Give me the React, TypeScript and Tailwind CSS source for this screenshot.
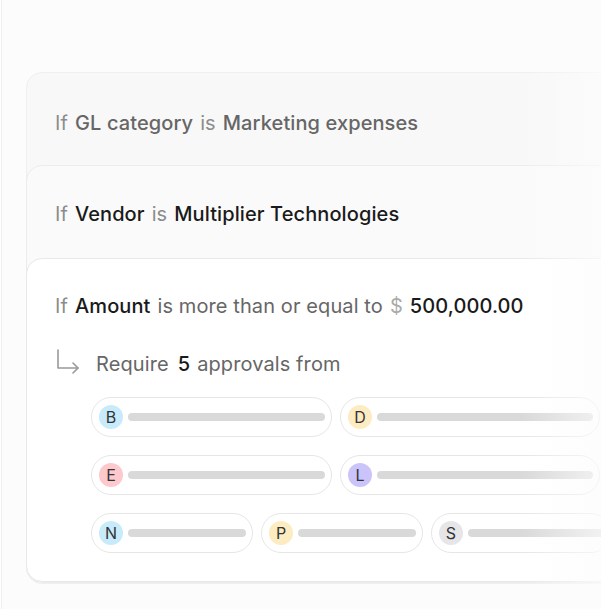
const approvers = [
  [
    { letter: 'B', color: 'bg-[#c8ebfb]', w: 'w-[241px]' },
    { letter: 'D', color: 'bg-[#fdecc1]', w: 'w-[260px]' },
  ],
  [
    { letter: 'E', color: 'bg-[#fdc9cc]', w: 'w-[241px]' },
    { letter: 'L', color: 'bg-[#cbc4fb]', w: 'w-[260px]' },
  ],
  [
    { letter: 'N', color: 'bg-[#c8ebfb]', w: 'w-[162px]' },
    { letter: 'P', color: 'bg-[#fdecc1]', w: 'w-[162px]' },
    { letter: 'S', color: 'bg-[#e6e6e8]', w: 'w-[180px]' },
  ],
]

function Pill({ letter, color, w }: { letter: string; color: string; w: string }) {
  return (
    <div className={`${w} h-[40px] shrink-0 rounded-full border-[1.5px] border-[#e6e6e6] bg-white flex items-center pl-[7px] pr-[6px] gap-[5px]`}>
      <div className={`w-[24px] h-[24px] rounded-full ${color} flex items-center justify-center text-[16px] text-[#333] shrink-0`}>
        {letter}
      </div>
      <div className="flex-1 h-[8px] rounded-full bg-[#d9d9d9]" />
    </div>
  )
}

export default function App() {
  return (
    <div className="h-[609px] w-[601px] overflow-hidden bg-white" style={{ fontFamily: 'Inter, "Noto Sans", sans-serif' }}>
      <div className="relative ml-px h-full border-l border-[#f0f0f0] bg-[#fcfcfc] pt-[72px] pl-[24px]">
        <div className="w-[640px] rounded-[16px] border border-[#efefef] bg-[#f8f8f8]">
          <div className="h-[92px] flex items-center gap-[7px] pt-[7px] px-[28px] text-[20px] tracking-[0.1px]">
            <span className="text-[#8c8c8c]">If</span>
            <span className="font-[450] text-[#666]">GL category</span>
            <span className="text-[#8c8c8c]">is</span>
            <span className="font-[450] text-[#666]">Marketing expenses</span>
          </div>
          <div className="-mx-px rounded-[16px] border border-[#ececec] bg-[#fafafa]">
            <div className="h-[92px] flex items-center gap-[7px] pt-[4px] px-[28px] text-[20px] tracking-[0.1px]">
              <span className="text-[#8c8c8c]">If</span>
              <span className="font-[450] text-[#1a1a1a]">Vendor</span>
              <span className="text-[#8c8c8c]">is</span>
              <span className="font-[450] text-[#1a1a1a]">Multiplier Technologies</span>
            </div>
            <div className="-mx-px rounded-[16px] border border-[#e8e8e8] bg-white pb-[28px]">
              <div className="h-[94px] flex items-center gap-[7px] px-[28px] text-[20px] tracking-[0.1px]">
                <span className="text-[#8c8c8c]">If</span>
                <span className="font-[450] text-[#1a1a1a]">Amount</span>
                <span className="text-[#666]">is more than or equal to</span>
                <span className="text-[#aaa]">$</span>
                <span className="font-[450] text-[#1a1a1a]">500,000.00</span>
              </div>
              <div className="flex items-center px-[28px] text-[20px] tracking-[0.1px] h-[22px]">
                <svg width="26" height="26" viewBox="0 0 26 26" fill="none" stroke="#999" strokeWidth="1.6" strokeLinecap="round" strokeLinejoin="round" className="-mt-[6px]">
                  <path d="M3 2v18h20" />
                  <path d="M18 15l5 5-5 5" />
                </svg>
                <span className="ml-[15px] text-[#666]">Require</span>
                <span className="ml-[9px] font-[450] text-[#1a1a1a]">5</span>
                <span className="ml-[7px] text-[#666]">approvals from</span>
              </div>
              <div className="mt-[22px] pl-[64px] flex flex-col gap-[18px]">
                {approvers.map((row, i) => (
                  <div key={i} className="flex gap-[8px]">
                    {row.map((a) => (
                      <Pill key={a.letter} {...a} />
                    ))}
                  </div>
                ))}
              </div>
            </div>
          </div>
        </div>
        <div className="pointer-events-none absolute top-0 right-0 h-full w-[80px] bg-gradient-to-r from-transparent to-[#fcfcfc]/70" />
      </div>
    </div>
  )
}
